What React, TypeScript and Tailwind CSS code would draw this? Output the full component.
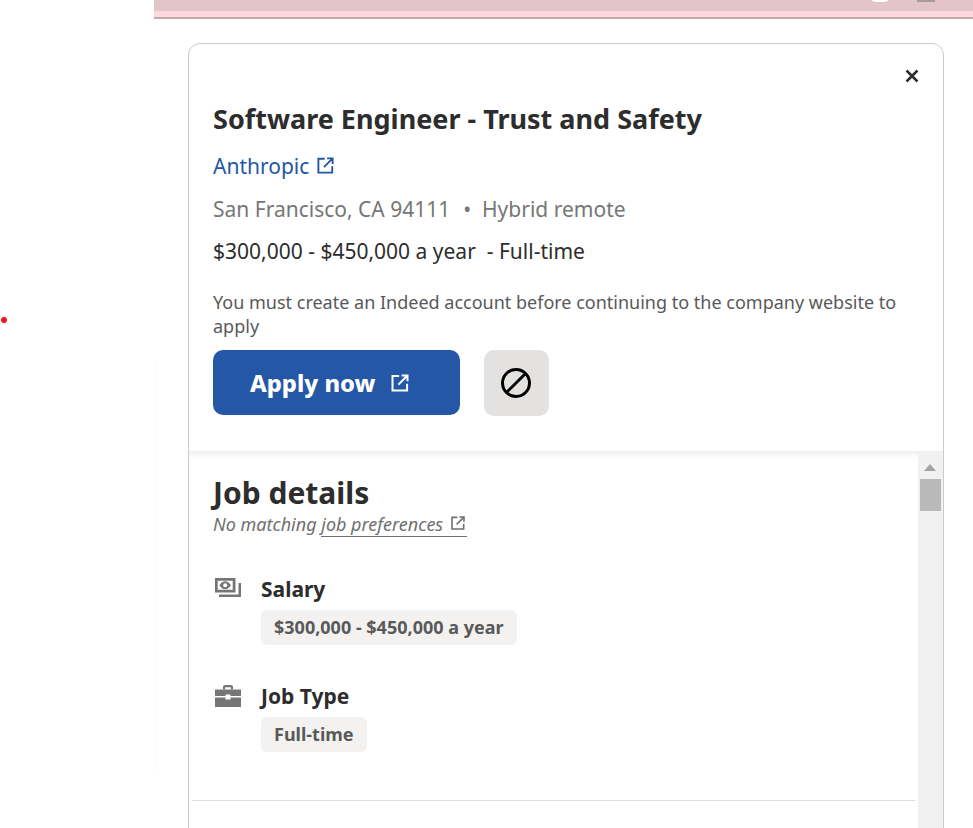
import React from "react";

const External = ({ className }: { className?: string }) => (
  <svg viewBox="0 0 24 24" fill="none" stroke="currentColor" strokeWidth="2.4" className={className}>
    <path d="M11 3.500H3V21H20.500V13" />
    <path d="M14 3h7v7M21 3 10 14" />
  </svg>
);

const Pill = ({ children }: { children: React.ReactNode }) => (
  <span className="inline-flex h-[35px] items-center rounded-[6px] bg-[#f3f2f1] px-[13px] text-[18px] font-bold text-[#595959]">
    {children}
  </span>
);

export default function App() {
  return (
    <div className="relative h-[828px] w-[973px] overflow-hidden bg-white font-['Noto_Sans',sans-serif] text-[#2d2d2d]">
      <span className="absolute left-[1px] top-[317px] h-[6px] w-[6px] rounded-full bg-[#f0141e]" />
      <span className="absolute left-[155px] top-[360px] h-[410px] w-px bg-[#fafafa]" />

      <div className="ml-[154px] flex h-[19px] flex-col">
        <div className="relative h-[11px] overflow-hidden bg-[#e2c4c9]">
          <span className="absolute left-[716px] top-[-10px] h-[12px] w-[20px] rounded-full bg-white" />
          <span className="absolute left-[763px] top-0 h-[2px] w-[18px] bg-[#a99a9c]" />
        </div>
        <div className="h-[6px] bg-[#fdd9dd]" />
        <div className="h-[2px] bg-[#c4a9ae]" />
      </div>

      <div className="ml-[188px] mt-[24px] h-[820px] w-[756px] rounded-[12px] border border-[#cccccc] bg-white">
        <div className="relative h-[407px] pl-[24px] pr-[24px]">
          <button className="absolute right-[24px] top-[25px] text-[#2d2d2d]">
            <svg viewBox="0 0 14 14" className="h-[14px] w-[14px]" stroke="currentColor" strokeWidth="2.5">
              <path d="M1.500 1.500 12.500 12.500M12.500 1.500 1.500 12.500" />
            </svg>
          </button>
          <h1 className="pt-[55px] text-[27px] font-bold leading-[40px]">Software Engineer - Trust and Safety</h1>
          <div className="mt-[13px] flex h-[30px] items-center gap-[7px] text-[21px] text-[#2557a7]">
            <span>Anthropic</span>
            <External className="mb-[3px] h-[19px] w-[19px]" />
          </div>
          <div className="mt-[12px] h-[30px] whitespace-pre text-[21px] leading-[30px] text-[#767676]">
            San Francisco, CA 94111<span className="ml-[2px]">  •  </span>Hybrid remote
          </div>
          <div className="mt-[12px] h-[30px] whitespace-pre text-[21px] leading-[30px] text-[#2d2d2d]">
            $300,000 - $450,000 a year  - Full-time
          </div>
          <p className="mt-[24px] text-[18px] leading-[24px] text-[#595959]">
            You must create an Indeed account before continuing to the company website to apply
          </p>
          <div className="mt-[12px] flex items-start gap-[24px]">
            <button className="flex h-[65px] w-[247px] items-center justify-start gap-[15px] rounded-[10px] bg-[#2557a7] pl-[37px] text-[23.700px] font-extrabold text-white">
              <span className="pt-[2px]">Apply now</span>
              <External className="h-[20px] w-[20px]" />
            </button>
            <button className="flex h-[66px] w-[65px] items-center justify-center rounded-[10px] bg-[#e4e2e0] pr-[2px] text-black">
              <svg viewBox="0 0 32 32" className="h-[32px] w-[32px]" fill="none" stroke="currentColor" strokeWidth="3">
                <circle cx="16" cy="16" r="13.500" />
                <path d="M6.500 25.500 25.500 6.500" />
              </svg>
            </button>
          </div>
        </div>

        <div className="flex h-[413px] bg-gradient-to-b from-[#eeeeee] to-white to-[7px]">
          <div className="min-w-0 flex-1 pl-[3px] pt-[23px]">
            <div className="pl-[21px]">
              <h2 className="text-[30px] font-bold leading-[38px]">Job details</h2>
              <div className="flex h-[25px] items-center text-[18px] italic text-[#6f6f6f]">
                <span className="whitespace-pre">No matching </span>
                <span className="flex h-[25px] items-center gap-[7px] border-b border-[#6f6f6f] pr-px">
                  job preferences
                  <External className="mb-[2px] h-[16px] w-[16px]" />
                </span>
              </div>
            </div>

            <div className="mt-[37px] flex pl-[23px]">
              <div className="w-[46px] pt-[4px] text-[#767676]">
                <svg viewBox="0 0 26 19" className="block h-[19px] w-[26px]">
                  <path fillRule="evenodd" fill="currentColor" d="M0 0h20.500v14.500H0zM2.700 2.700v9h15v-9z" />
                  <path fill="currentColor" d="M10.200 3.200c3.400 0 5.800 4 5.800 4s-2.400 4-5.800 4-5.800-4-5.800-4 2.400-4 5.800-4z" />
                  <circle cx="10.200" cy="7.200" r="2" fill="#fff" />
                  <path fill="currentColor" d="M23.500 5H26v14H4v-2.500h19.500z" />
                </svg>
              </div>
              <div>
                <div className="text-[21px] font-bold leading-[30px]">Salary</div>
                <div className="mt-[6px]"><Pill>$300,000 - $450,000 a year</Pill></div>
              </div>
            </div>

            <div className="mt-[36px] flex pl-[23px]">
              <div className="w-[46px] pt-[4px] text-[#767676]">
                <svg viewBox="0 0 26 22" className="block h-[22px] w-[26px]" fill="currentColor">
                  <path d="M8 2A2 2 0 0 1 10 0h6a2 2 0 0 1 2 2v2.500h-2.200V2.200h-5.600v2.300H8z" />
                  <path d="M0 4.500h26V11H15.500V9.500h-5V11H0z" />
                  <path d="M0 12.500h10.500v2h5v-2H26V22H0z" />
                </svg>
              </div>
              <div>
                <div className="text-[21px] font-bold leading-[30px]">Job Type</div>
                <div className="mt-[6px]"><Pill>Full-time</Pill></div>
              </div>
            </div>

            <div className="mr-[3px] mt-[48px] h-px bg-[#dddddd]" />
          </div>

          <div className="relative mt-[3px] w-[25px] shrink-0 bg-[#f1f1f1]">
            <svg viewBox="0 0 12 7" className="absolute left-[6px] top-[10px] h-[7px] w-[12px]" fill="#a3a3a3">
              <path d="M6 0 12 7H0z" />
            </svg>
            <div className="absolute left-[2px] top-[25px] h-[32px] w-[21px] bg-[#b9b9b9]" />
          </div>
        </div>
      </div>
    </div>
  );
}
